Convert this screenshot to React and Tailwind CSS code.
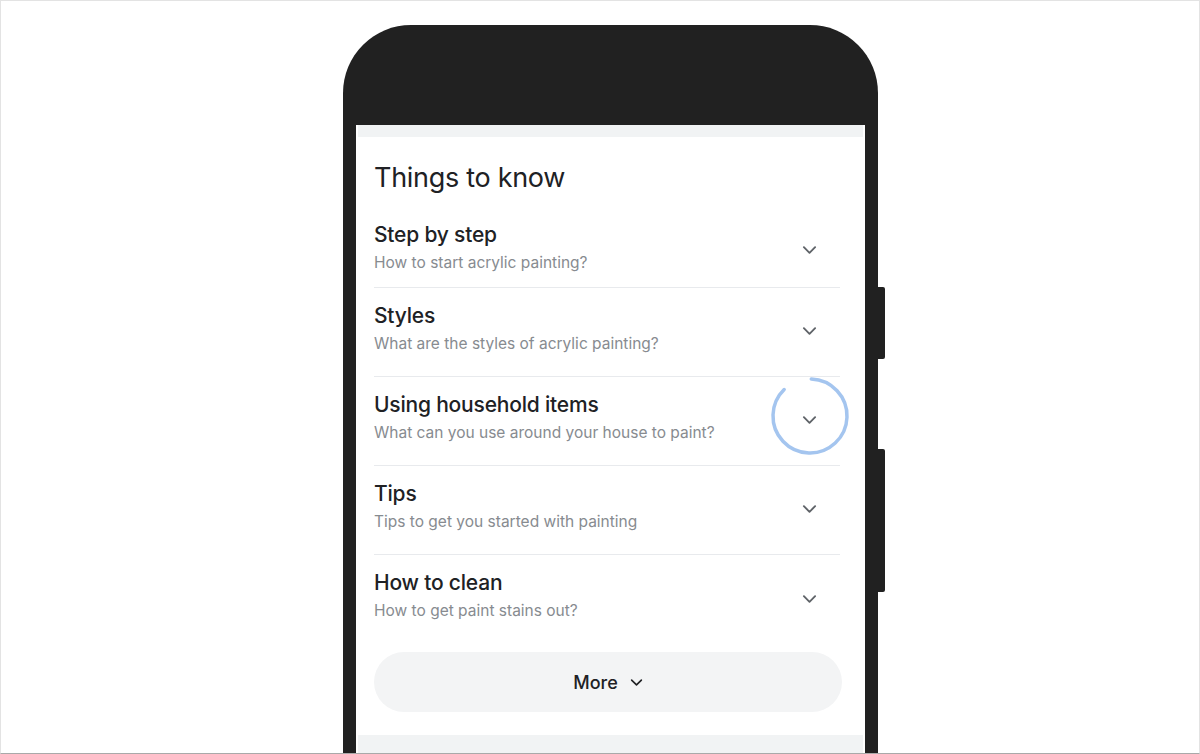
import React from "react";

const rows = [
  { title: "Step by step", sub: "How to start acrylic painting?" },
  { title: "Styles", sub: "What are the styles of acrylic painting?" },
  { title: "Using household items", sub: "What can you use around your house to paint?", loading: true },
  { title: "Tips", sub: "Tips to get you started with painting" },
  { title: "How to clean", sub: "How to get paint stains out?" },
];

function Chevron({ className = "" }) {
  return (
    <svg viewBox="0 0 16 10" className={className} fill="none">
      <path d="M2 2 L8 8 L14 2" stroke="currentColor" strokeWidth="2" strokeLinecap="round" strokeLinejoin="round" />
    </svg>
  );
}

function Spinner() {
  const r = 37;
  const c = 2 * Math.PI * r;
  const arc = c * 0.87;
  return (
    <svg viewBox="0 0 80 80" className="absolute w-[80px] h-[80px] -left-[24px] -top-[29px]">
      <circle
        cx="40"
        cy="40"
        r={r}
        fill="none"
        stroke="#a4c5ef"
        strokeWidth="3.5"
        strokeLinecap="round"
        strokeDasharray={`${arc} ${c}`}
        transform="rotate(-88 40 40)"
      />
    </svg>
  );
}

export default function App() {
  return (
    <div
      className="w-[1200px] h-[754px] bg-white overflow-hidden border border-[#e3e3e3] border-b-[#a9a9a9] box-border"
      style={{ fontFamily: "Inter, Roboto, 'Noto Sans', sans-serif" }}
    >
      <div className="ml-[342px] mt-[24px] w-[535px] relative">
        <div className="absolute right-[-7px] top-[262px] w-[8px] h-[72px] bg-[#212121] rounded-r-[2px]" />
        <div className="absolute right-[-7px] top-[424px] w-[8px] h-[143px] bg-[#212121] rounded-r-[2px]" />
        <div className="bg-[#212121] rounded-t-[68px] pt-[100px] px-[13px] h-[760px]">
          <div className="bg-white h-full flex flex-col">
            <div className="h-[12px] bg-[#f1f3f4] mx-[2px]" />
            <div className="pl-[18px] pr-[25px] pt-[24px] flex flex-col">
              <h2 className="text-[27px] leading-[34px] text-[#202124] font-normal tracking-[-0.3px]">
                Things to know
              </h2>
              <div className="mt-[12px] flex flex-col">
                {rows.map((r, i) => (
                  <div
                    key={r.title}
                    className={`flex items-center justify-between ${
                      i === 0 ? "h-[81px] pb-0" : "h-[89px] pb-[8px]"
                    } ${i < rows.length - 1 ? "border-b border-[#e8eaed]" : ""}`}
                  >
                    <div className="flex flex-col gap-[5px]">
                      <div className="text-[21px] leading-[26px] text-[#202124] font-medium tracking-[-0.2px]">
                        {r.title}
                      </div>
                      <div className="text-[15.5px] leading-[20px] text-[#878b90]">{r.sub}</div>
                    </div>
                    <div className="relative w-[30px] h-[30px] mr-[16px] mt-[6px] flex items-center justify-center text-[#5f6368]">
                      {r.loading && <Spinner />}
                      <Chevron className="w-[15px] h-[10px]" />
                    </div>
                  </div>
                ))}
              </div>
              <button className="mt-[8px] h-[60px] w-[468px] rounded-full bg-[#f3f4f5] flex items-center justify-center gap-[12px] text-[#202124]">
                <span className="text-[18px] font-medium">More</span>
                <Chevron className="w-[13px] h-[9px]" />
              </button>
            </div>
            <div className="mt-[23px] h-[20px] bg-[#f1f3f4] mx-[2px]" />
          </div>
        </div>
      </div>
    </div>
  );
}
